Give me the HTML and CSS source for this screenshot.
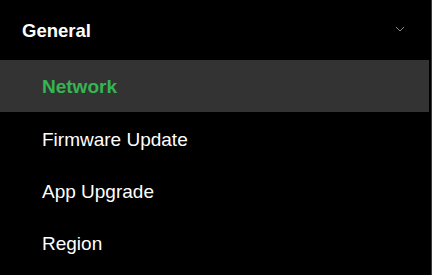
FILE: index.html
```html
<!DOCTYPE html>
<html>
<head>
<meta charset="utf-8">
<link rel="stylesheet" href="styles.css">
</head>
<body>
<div class="screen">
  <div class="menu">
    <div class="header">
      <span class="header-title">General</span>
      <svg class="chevron" width="10" height="6" viewBox="0 0 10 6"><polyline points="1,1 5,5 9,1" fill="none" stroke="#8a8a8a" stroke-width="1"/></svg>
    </div>
    <div class="item active">Network</div>
    <div class="item">Firmware Update</div>
    <div class="item">App Upgrade</div>
    <div class="item">Region</div>
  </div>
  <div class="edge"></div>
</div>
</body>
</html>
```
FILE: styles.css
```css
html, body {
  margin: 0;
  padding: 0;
  background: #000;
}
body {
  font-family: "Liberation Sans", Arial, Helvetica, sans-serif;
  color: #fff;
}
.screen {
  display: flex;
  width: 432px;
  height: 275px;
  overflow: hidden;
}
.menu {
  width: 429px;
  display: flex;
  flex-direction: column;
}
.edge {
  width: 1px;
  margin-left: 2px;
  background: #3c3c3c;
}
.header {
  height: 60px;
  padding: 2px 24px 0 22px;
  box-sizing: border-box;
  display: flex;
  align-items: center;
  justify-content: space-between;
}
.header-title {
  font-size: 18.5px;
  font-weight: bold;
  line-height: 22px;
}
.chevron {
  display: block;
  margin-top: -5px;
}
.item {
  height: 52px;
  padding-left: 42px;
  padding-top: 2px;
  box-sizing: border-box;
  display: flex;
  align-items: center;
  font-size: 19px;
  line-height: 22px;
}
.item.active {
  background: #333333;
  color: #35b551;
  font-weight: bold;
}
.item:not(.active) {
  padding-top: 3px;
}
```
